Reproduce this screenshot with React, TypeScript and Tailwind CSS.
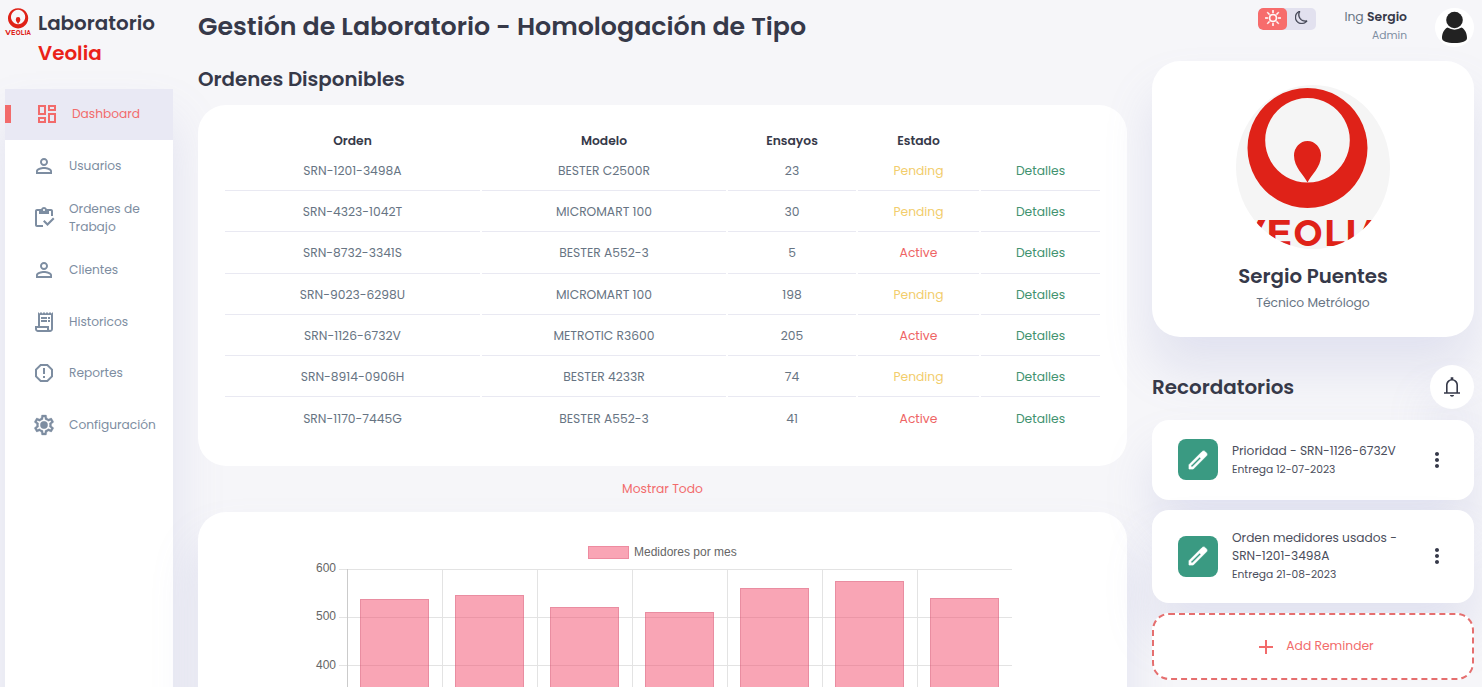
import React from 'react';
import type { IconType } from 'react-icons';
import {
  MdOutlineDashboard,
  MdPersonOutline,
  MdOutlineInventory,
  MdOutlineReceiptLong,
  MdReportGmailerrorred,
  MdMoreVert,
  MdAdd,
} from 'react-icons/md';
import { BsSun, BsMoon } from 'react-icons/bs';

function GearIcon({ className }: { className?: string }) {
  return (
    <svg viewBox="0 0 24 24" className={className} fill="currentColor" stroke="currentColor" strokeWidth="0.3">
      <path d="M19.430 12.980c.04-.32.07-.64.07-.98 0-.34-.03-.66-.07-.98l2.110-1.650c.19-.15.24-.42.12-.64l-2-3.460c-.09-.16-.26-.25-.44-.25-.06 0-.12.01-.17.03l-2.490 1c-.52-.4-1.080-.73-1.690-.98l-.38-2.650C14.460 2.180 14.250 2 14 2h-4c-.25 0-.46.18-.49.42l-.38 2.650c-.61.25-1.170.59-1.690.98l-2.490-1c-.06-.02-.12-.03-.18-.03-.17 0-.34.09-.43.25l-2 3.460c-.13.22-.07.49.12.64l2.110 1.650c-.04.32-.07.65-.07.98 0 .33.03.66.07.98l-2.110 1.650c-.19.15-.24.42-.12.64l2 3.460c.09.16.26.25.44.25.06 0 .12-.01.17-.03l2.490-1c.52.4 1.080.73 1.690.98l.38 2.650c.03.24.24.42.49.42h4c.25 0 .46-.18.49-.42l.38-2.650c.61-.25 1.170-.59 1.690-.98l2.490 1c.06.02.12.03.18.03.17 0 .34-.09.43-.25l2-3.460c.12-.22.07-.49-.12-.64l-2.110-1.650zm-1.980-1.710c.04.31.05.52.05.73 0 .21-.02.43-.05.73l-.14 1.130.89.7 1.080.84-.7 1.210-1.270-.51-1.040-.42-.9.68c-.43.32-.84.56-1.250.73l-1.060.43-.16 1.130-.2 1.350h-1.400l-.19-1.350-.16-1.130-1.060-.43c-.43-.18-.83-.41-1.230-.71l-.91-.7-1.060.43-1.270.51-.7-1.210 1.080-.84.89-.7-.14-1.130c-.03-.31-.05-.54-.05-.74s.02-.43.05-.73l.14-1.130-.89-.7-1.080-.84.7-1.210 1.270.51 1.040.42.9-.68c.43-.32.84-.56 1.250-.73l1.060-.43.16-1.130.2-1.350h1.390l.19 1.350.16 1.130 1.060.43c.43.18.83.41 1.230.71l.91.7 1.060-.43 1.270-.51.7 1.210-1.070.85-.89.7.14 1.130z" />
      <circle cx="12" cy="12" r="3.700" />
    </svg>
  );
}

const menu: { label: string; icon: IconType | typeof GearIcon }[] = [
  { label: 'Usuarios', icon: MdPersonOutline },
  { label: 'Ordenes de Trabajo', icon: MdOutlineInventory },
  { label: 'Clientes', icon: MdPersonOutline },
  { label: 'Historicos', icon: MdOutlineReceiptLong },
  { label: 'Reportes', icon: MdReportGmailerrorred },
  { label: 'Configuración', icon: GearIcon },
];

const orders = [
  ['SRN-1201-3498A', 'BESTER C2500R', '23', 'Pending'],
  ['SRN-4323-1042T', 'MICROMART 100', '30', 'Pending'],
  ['SRN-8732-3341S', 'BESTER A552-3', '5', 'Active'],
  ['SRN-9023-6298U', 'MICROMART 100', '198', 'Pending'],
  ['SRN-1126-6732V', 'METROTIC R3600', '205', 'Active'],
  ['SRN-8914-0906H', 'BESTER 4233R', '74', 'Pending'],
  ['SRN-1170-7445G', 'BESTER A552-3', '41', 'Active'],
];

const barTops = [87, 83.5, 95, 100, 76, 69, 86];

const letters: [string, number, number][] = [
  ['V', 0, 33],
  ['E', 34, 26],
  ['O', 61.5, 29],
  ['L', 92, 21],
  ['I', 113, 12],
  ['A', 125, 25],
];

function VeoliaMark() {
  return (
    <>
      <path
        fillRule="evenodd"
        fill="#df2218"
        d="M75.500 1a60 60 0 1 0 .01 0zM75.500 11a42.300 42.300 0 1 1-.01 0z"
      />
      <path fill="#df2218" d="M75.500 95.500C72 88 62 80.500 62 68.500a13.500 14.500 0 0 1 27 0C89 80.500 79 88 75.500 95.500z" />
      {letters.map(([ch, x, w]) => (
        <text
          key={ch}
          x={x}
          y="158.500"
          textLength={w}
          lengthAdjust="spacingAndGlyphs"
          className="fill-[#df2218] font-['Montserrat','DejaVu_Sans',sans-serif] text-[37px] font-bold"
        >
          {ch}
        </text>
      ))}
    </>
  );
}

function Sidebar() {
  return (
    <aside className="flex w-[168px] shrink-0 flex-col">
      <div className="flex h-[89px] shrink-0 gap-[7px]">
        <svg viewBox="0 0 150 160" className="mt-2 h-[27px] w-[26px] shrink-0 overflow-visible">
          <VeoliaMark />
        </svg>
        <h2 className="mt-[8px] text-[19.9px] leading-[30px] font-semibold">
          Laboratorio
          <br />
          <span className="text-[#ea2218]">Veolia</span>
        </h2>
      </div>
      <nav className="flex h-[640px] shrink-0 flex-col bg-white text-[12.2px] leading-[18px] text-[#7d8da1] shadow-[0_32px_48px_rgba(132,139,200,0.18)]">
        <a className="flex h-[51.4px] shrink-0 items-center bg-[#e9e9f4] pb-[1.5px] text-[#f26b6b]">
          <span className="h-[18px] w-[6px] bg-[#f26b6b]" />
          <MdOutlineDashboard className="ml-[24px] size-[24px]" />
          <span className="ml-[13px]">Dashboard</span>
        </a>
        {menu.map(({ label, icon: Icon }) => (
          <a key={label} className="flex h-[51.8px] shrink-0 items-center gap-[13px] pl-[27px]">
            <Icon className="size-[24px] shrink-0" />
            <span className="pr-4">{label}</span>
          </a>
        ))}
      </nav>
    </aside>
  );
}

function Orders() {
  return (
    <section className="h-[361px] shrink-0 rounded-[28px] bg-white px-[25px] pt-[24px]">
      <table className="w-[879px] table-fixed border-separate border-spacing-[2px] text-center text-[12.3px] leading-[18px]">
        <colgroup>
          <col className="w-[255px]" />
          <col className="w-[244px]" />
          <col className="w-[128px]" />
          <col className="w-[121px]" />
          <col />
        </colgroup>
        <thead>
          <tr className="h-[19px]">
            {['Orden', 'Modelo', 'Ensayos', 'Estado', ''].map((h) => (
              <th key={h} className="p-0 font-semibold">
                {h}
              </th>
            ))}
          </tr>
        </thead>
        <tbody className="text-[#677483]">
          {orders.map((row, i) => (
            <tr key={row[0]} className={i === orders.length - 1 ? 'h-[39.2px]' : 'h-[39.2px] [&>td]:border-b [&>td]:border-[#e9e9f2]'}>
              <td className="p-0">{row[0]}</td>
              <td className="p-0">{row[1]}</td>
              <td className="p-0">{row[2]}</td>
              <td className={row[3] === 'Active' ? 'p-0 text-[#ee6565]' : 'p-0 text-[#f2cd6b]'}>{row[3]}</td>
              <td className="p-0 text-[#41926f]">Detalles</td>
            </tr>
          ))}
        </tbody>
      </table>
    </section>
  );
}

function Chart() {
  return (
    <section className="h-[420px] shrink-0 rounded-[28px] bg-white shadow-[0_32px_48px_rgba(132,139,200,0.18)]">
      <svg
        width="929"
        height="400"
        className="block font-['Liberation_Sans',Arial,sans-serif] text-[12px]"
        shapeRendering="crispEdges"
      >
        <rect x="390.500" y="34.500" width="40" height="12" fill="#f9a5b5" stroke="#ee8ba0" />
        <text x="436" y="44" className="fill-[#666]">
          Medidores por mes
        </text>
        {[600, 500, 400].map((v, i) => (
          <g key={v}>
            <text x="138" y={60 + i * 48.300} textAnchor="end" className="fill-[#666]">
              {v}
            </text>
            <rect x="141" y={57 + i * 48} width="673" height="1" fill="#e3e3e3" />
          </g>
        ))}
        {barTops.map((_, i) => (
          <rect key={i} x={149 + i * 95} y="57" width="1" height="343" fill={i === 0 ? '#cbcbcb' : '#e3e3e3'} />
        ))}
        {barTops.map((top, i) => (
          <g key={i}>
            <rect x={162 + i * 95} y={Math.floor(top)} width="69" height="313" fill="#f44b6c" fillOpacity="0.5" />
            <path
              d={`M${162.5 + i * 95} 400V${Math.floor(top) + 0.5}h68V400`}
              fill="none"
              stroke="#c85a76"
              strokeOpacity="0.32"
            />
          </g>
        ))}
      </svg>
    </section>
  );
}

function Reminder({ title, date, height }: { title: string; date: string; height: string }) {
  return (
    <article
      className={`flex shrink-0 items-center rounded-[17px] bg-white pr-[25px] pl-[26px] shadow-[0_32px_48px_rgba(132,139,200,0.18)] ${height}`}
    >
      <span className="mb-px flex h-[41px] w-[40px] shrink-0 items-center justify-center rounded-[8px] bg-[#3a9a82] text-white">
        <svg viewBox="0 0 24 24" className="size-[24px]" fill="currentColor" stroke="currentColor" strokeWidth="0.7">
          <path d="M5 19h1.400l8.600-8.600-1.400-1.400L5 17.600zM3 21v-4.250L16.200 3.575q.3-.275.663-.425t.762-.15.775.15.650.450L20.425 5q.3.275.437.650T21 6.400q0 .4-.137.763t-.438.662L7.250 21z" />
        </svg>
      </span>
      <div className="ml-[14px] w-[178px] text-[#4b4e5c]">
        <h5 className="text-[12.2px] leading-[18px]">{title}</h5>
        <p className="text-[10.7px] leading-[19px]">{date}</p>
      </div>
      <MdMoreVert className="mb-px ml-[15px] size-[24px] shrink-0" />
    </article>
  );
}

function RightPanel() {
  return (
    <aside className="ml-[25px] flex w-[322px] shrink-0 flex-col">
      <div className="flex h-[61px] shrink-0 items-start justify-end pt-[8px]">
        <div className="flex h-[22px] w-[58px] overflow-hidden rounded-[5px] bg-[#e2e1ef]">
          <span className="flex w-[29px] justify-center rounded-[5px] bg-[#f76c6c] pt-[2px] text-white">
            <BsSun className="size-[16px]" stroke="currentColor" strokeWidth="0.6" />
          </span>
          <span className="flex w-[29px] justify-center pt-[3px]">
            <BsMoon className="size-[13px]" stroke="currentColor" strokeWidth="0.5" />
          </span>
        </div>
        <div className="w-[91px] text-right">
          <p className="text-[12.4px] leading-[18px] text-[#677483]">
            Ing <b className="font-semibold text-[#363949]">Sergio</b>
          </p>
          <p className="text-[10.700px] leading-[19px] text-[#7d8da1]">Admin</p>
        </div>
        <svg viewBox="0 0 39 39" className="ml-[28px] size-[39px]">
          <circle cx="19.500" cy="19.500" r="19.500" fill="#fff" />
          <circle cx="19.500" cy="12" r="8.300" fill="#222" />
          <path d="M12.500 19.600q7 4.200 14 0c4 2 5.500 6.500 5.500 10.400 0 3.500-5 5-12.500 5S7 33.500 7 30c0-3.900 1.500-8.400 5.500-10.400z" fill="#222" />
        </svg>
      </div>

      <section className="flex h-[276px] shrink-0 flex-col items-center rounded-[28px] bg-white pt-[24px] shadow-[0_32px_48px_rgba(132,139,200,0.18)]">
        <svg viewBox="4 -2 154 164" className="h-[164px] w-[154px]">
          <defs>
            <clipPath id="portrait">
              <ellipse cx="81" cy="80" rx="77" ry="82" />
            </clipPath>
          </defs>
          <g clipPath="url(#portrait)">
            <rect x="4" y="-2" width="154" height="164" fill="#f5f5f5" />
            <VeoliaMark />
          </g>
        </svg>
        <h2 className="mt-[12px] text-[19.8px] leading-[30px] font-semibold">Sergio Puentes</h2>
        <p className="mt-[2px] text-[12.3px] leading-[20px] text-[#677483]">Técnico Metrólogo</p>
      </section>

      <div className="mt-[28px] mb-[11px] flex h-[44px] shrink-0 items-center justify-between">
        <h2 className="pt-[2px] text-[19.9px] font-semibold">Recordatorios</h2>
        <span className="flex size-[44px] items-center justify-center rounded-full bg-white shadow-[0_32px_48px_rgba(132,139,200,0.18)]">
          <svg viewBox="0 0 24 24" className="size-[24px]" fill="currentColor">
            <path d="M4 18.800v-1.600h2v-7.200q0-2.075 1.250-3.687T10.700 4.200V2.200h2.600v2q2.200.5 3.450 2.113T18 10v7.200h2v1.600zm8 3q-.825 0-1.412-.487T10 20h4q0 .825-.587 1.313T12 21.800m-4.400-4.600h8.800v-7.200q0-1.850-1.275-3.125T12 5.600 8.875 6.875 7.600 10z" />
          </svg>
        </span>
      </div>

      <Reminder title="Prioridad - SRN-1126-6732V" date="Entrega 12-07-2023" height="h-[80px]" />
      <div className="h-[10px] shrink-0" />
      <Reminder title="Orden medidores usados - SRN-1201-3498A" date="Entrega 21-08-2023" height="h-[93px]" />
      <button className="mt-[10px] flex h-[67px] shrink-0 items-center justify-center rounded-[17px] border-2 border-dashed border-[#e56f6f] bg-white pl-[2px] text-[12.3px] text-[#f26b6b]">
        <MdAdd className="size-[24px]" />
        <span className="ml-[8px]">Add Reminder</span>
      </button>
    </aside>
  );
}

export default function App() {
  return (
    <div className="flex h-[687px] w-[1482px] overflow-hidden bg-[#f6f6f9] pl-[5px] font-['Poppins',sans-serif] text-[#363949]">
      <Sidebar />
      <main className="ml-[25px] flex w-[929px] shrink-0 flex-col">
        <h1 className="mt-[8px] shrink-0 text-[25.3px] leading-[37px] font-semibold">
          Gestión de Laboratorio - Homologación de Tipo
        </h1>
        <h2 className="mt-[19px] mb-[11px] shrink-0 text-[19.8px] leading-[30px] font-semibold">Ordenes Disponibles</h2>
        <Orders />
        <a className="my-[14px] shrink-0 text-center text-[12.3px] leading-[18px] text-[#f26b6b]">Mostrar Todo</a>
        <Chart />
      </main>
      <RightPanel />
    </div>
  );
}
